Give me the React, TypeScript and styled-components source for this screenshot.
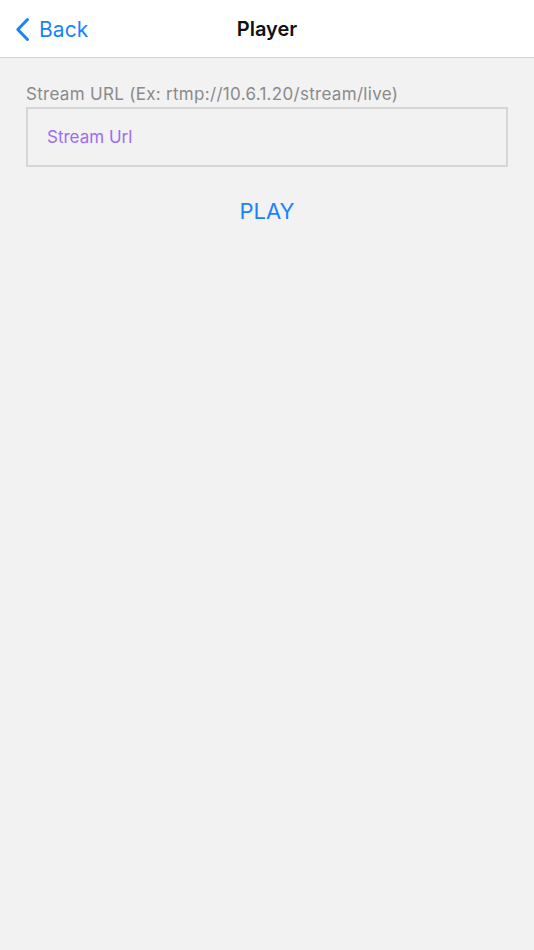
import React from 'react';
import styled, { createGlobalStyle } from 'styled-components';

const GlobalStyle = createGlobalStyle`
  html, body {
    margin: 0;
    padding: 0;
    height: 100%;
    background: #f2f2f2;
  }
  #root {
    min-height: 100%;
  }
  * {
    box-sizing: border-box;
  }
`;

const App = () => {
  return (
    <>
      <GlobalStyle />
      <Page>
        <NavBar>
          <BackButton>
            <svg width="15" height="25" viewBox="0 0 15 25" fill="none">
              <path
                d="M12.5 2.5L2.8 12.5L12.5 22.5"
                stroke="#1a82fb"
                strokeWidth="3"
                strokeLinecap="round"
                strokeLinejoin="round"
              />
            </svg>
            <BackLabel>Back</BackLabel>
          </BackButton>
          <NavTitle>Player</NavTitle>
        </NavBar>

        <Content>
          <FieldLabel>Stream URL (Ex: rtmp://10.6.1.20/stream/live)</FieldLabel>
          <UrlInput placeholder="Stream Url" />
          <PlayButton>PLAY</PlayButton>
        </Content>
      </Page>
    </>
  );
};

const Page = styled.div`
  min-height: 950px;
  background: #f2f2f2;
  font-family: Inter, Roboto, 'Liberation Sans', sans-serif;
`;

const NavBar = styled.div`
  position: relative;
  height: 58px;
  background: #ffffff;
  border-bottom: 1px solid #d3d3d3;
  display: flex;
  align-items: center;
  justify-content: center;
`;

const BackButton = styled.div`
  position: absolute;
  left: 15px;
  top: 1px;
  bottom: 0;
  display: flex;
  align-items: center;
  gap: 9px;
  color: #1a82fb;
  cursor: pointer;
`;

const BackLabel = styled.span`
  font-size: 21px;
  letter-spacing: 0.1px;
`;

const NavTitle = styled.h1`
  margin: 0;
  font-size: 20px;
  font-weight: 600;
  color: #111111;
`;

const Content = styled.div`
  display: flex;
  flex-direction: column;
  padding: 24px 26px 0 26px;
`;

const FieldLabel = styled.label`
  font-size: 17px;
  letter-spacing: 0.3px;
  color: #8a8a8a;
  line-height: 24px;
`;

const UrlInput = styled.input`
  margin-top: 1px;
  height: 60px;
  width: 100%;
  border: 2px solid #d6d6d6;
  background: #f2f2f2;
  padding: 0 19px;
  font-family: inherit;
  font-size: 17px;
  color: #222;
  outline: none;

  &::placeholder {
    color: #9d6cf2;
  }
`;

const PlayButton = styled.button`
  align-self: center;
  margin-top: 31px;
  border: none;
  background: transparent;
  color: #1a82fb;
  font-family: inherit;
  font-size: 22px;
  padding: 0;
  cursor: pointer;
`;

export default App;
